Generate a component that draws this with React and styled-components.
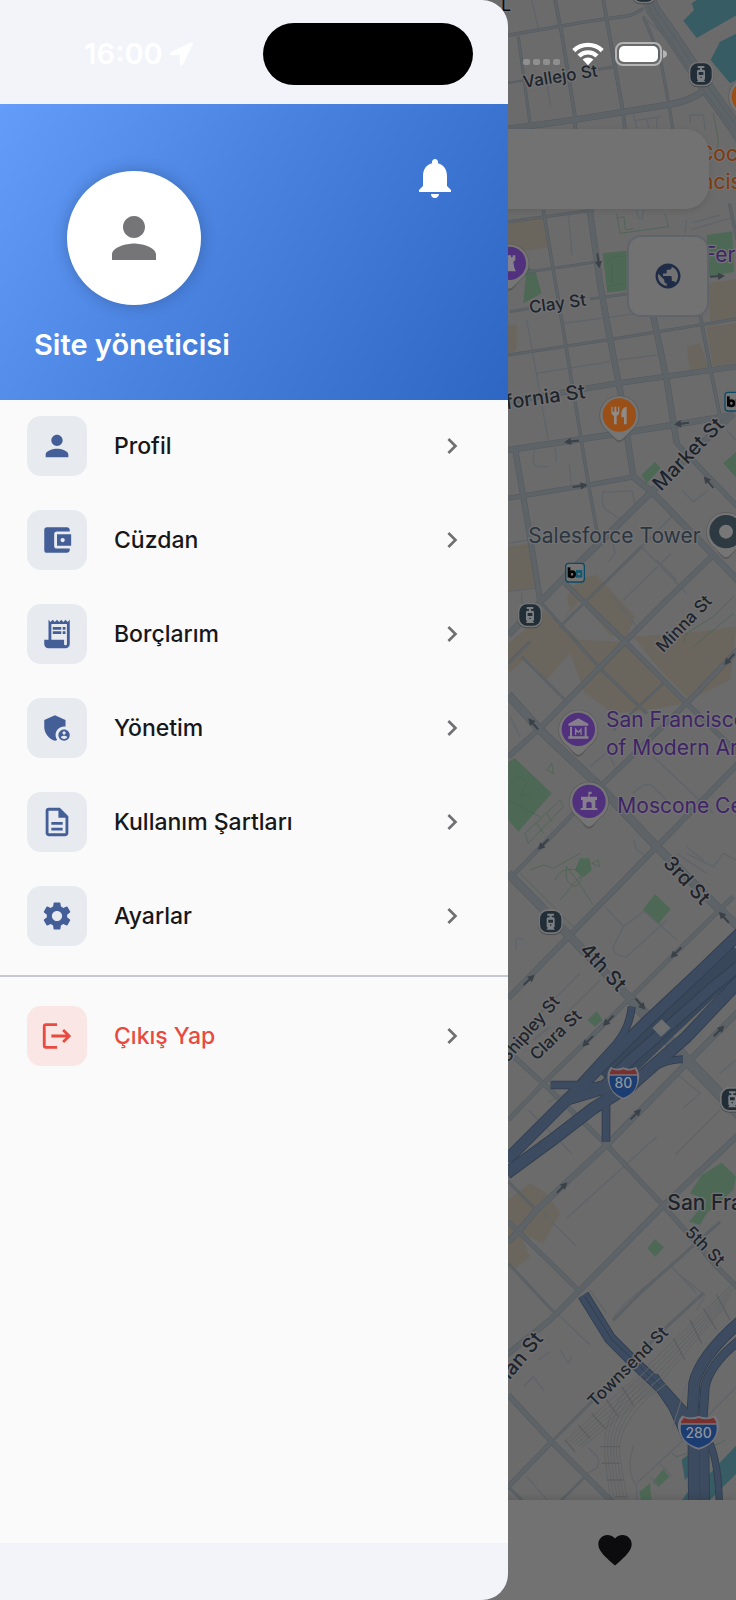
import React from "react";
import styled, { createGlobalStyle } from "styled-components";
import {
  MdAccountBalanceWallet,
  MdAdminPanelSettings,
  MdChevronRight,
  MdFavorite,
  MdLogout,
  MdNotifications,
  MdOutlineDescription,
  MdPerson,
  MdPublic,
  MdReceiptLong,
  MdSettings,
} from "react-icons/md";

const GlobalStyle = createGlobalStyle`
  * {
    box-sizing: border-box;
  }

  body {
    margin: 0;
    background: #6c6c6c;
    font-family: Inter, "Liberation Sans", sans-serif;
  }
`;

const Screen = styled.div`
  position: relative;
  display: flex;
  flex-direction: column;
  min-height: 100vh;
  overflow: hidden;
`;

/* ---------- page behind the drawer ---------- */

const MapCanvas = styled.svg`
  position: absolute;
  inset: 0;
  width: 100%;
  height: 100%;
  font-family: Inter, "Liberation Sans", sans-serif;
`;

const MapControls = styled.div`
  position: relative;
  display: flex;
  flex-direction: column;
  align-items: flex-end;
  gap: 26px;
  padding: 129px 27px 0;
`;

const SearchInput = styled.input`
  width: 100%;
  height: 80px;
  padding: 0 24px;
  border: 0;
  border-radius: 24px;
  background: #727272;
  box-shadow: 0 2px 6px rgba(0, 0, 0, 0.1);
  font: inherit;
  font-size: 23px;
`;

const MapButton = styled.button`
  display: flex;
  align-items: center;
  justify-content: center;
  width: 82px;
  height: 82px;
  padding: 0;
  border: 2px solid #60646b;
  border-radius: 14px;
  background: #727272;
  color: #1f2c48;
  font-size: 30px;
`;

const BottomNav = styled.nav`
  position: relative;
  display: grid;
  grid-template-columns: repeat(3, 1fr);
  height: 100px;
  margin-top: auto;
  background: #727272;
  box-shadow: 0 -2px 8px rgba(0, 0, 0, 0.12);
`;

const NavButton = styled.button`
  grid-column: 3;
  display: flex;
  align-items: center;
  justify-content: center;
  padding: 0 0 0 4px;
  border: 0;
  background: none;
  color: #0c0c0e;
  font-size: 40px;
`;

/* ---------- drawer ---------- */

const Drawer = styled.aside`
  position: absolute;
  top: 0;
  bottom: 0;
  left: 0;
  display: flex;
  flex-direction: column;
  width: 69%;
  padding: 104px 0 57px;
  border-radius: 0 26px 26px 0;
  background: #f2f4fa;
`;

const DrawerHeader = styled.header`
  display: flex;
  align-items: flex-start;
  justify-content: space-between;
  height: 296px;
  padding: 50px 49px 0 34px;
  background: linear-gradient(120deg, #639cf9 0%, #4a83e0 42%, #2e66c4 100%);
  color: #ffffff;
`;

const User = styled.div`
  display: flex;
  flex-direction: column;
  align-items: center;
  gap: 24px;
  width: 200px;
  padding-top: 17px;
`;

const Avatar = styled.div`
  display: flex;
  align-items: center;
  justify-content: center;
  width: 134px;
  height: 134px;
  border-radius: 50%;
  background: #ffffff;
  box-shadow: 0 0 16px rgba(0, 0, 0, 0.22);
  color: #757577;
  font-size: 66px;
`;

const UserName = styled.h1`
  width: 100%;
  margin: 0;
  font-size: 29px;
  font-weight: 600;
  line-height: 32px;
  white-space: nowrap;
`;

const BellButton = styled.button`
  display: flex;
  padding: 0;
  border: 0;
  background: none;
  color: inherit;
  font-size: 48px;
`;

const DrawerBody = styled.nav`
  flex: 1;
  padding-top: 16px;
  background: #fafafa;
`;

const MenuList = styled.ul`
  display: flex;
  flex-direction: column;
  gap: 34px;
  margin: 0;
  padding: 0;
  list-style: none;
`;

const MenuItem = styled.button`
  display: flex;
  align-items: center;
  gap: 27px;
  width: 100%;
  padding: 0 40px 0 27px;
  border: 0;
  background: none;
  color: ${(props) => (props.$danger ? "#e94a3f" : "#17171a")};
  font: inherit;
  font-size: 23px;
  font-weight: 500;
  line-height: 28px;
  text-align: left;
`;

const IconTile = styled.span`
  display: flex;
  align-items: center;
  justify-content: center;
  width: 60px;
  height: 60px;
  border-radius: 14px;
  background: ${(props) => (props.$danger ? "#fae7e5" : "#e7ebf0")};
  color: ${(props) => (props.$danger ? "#e94a3f" : "#445f98")};
  font-size: 34px;
`;

const MenuLabel = styled.span`
  flex: 1;
`;

const Chevron = styled(MdChevronRight)`
  color: #707072;
  font-size: 32px;
`;

const Divider = styled.hr`
  height: 2px;
  margin: 29px 0;
  border: 0;
  background: #c5c8d0;
`;

/* ---------- status bar ---------- */

const StatusBar = styled.div`
  position: absolute;
  top: 0;
  left: 0;
  right: 0;
  display: grid;
  grid-template-columns: 1fr 210px 1fr;
  align-items: center;
  height: 108px;
  color: #ffffff;
  pointer-events: none;
`;

const StatusLeft = styled.div`
  display: flex;
  align-items: center;
  justify-content: center;
  gap: 6px;
  padding-left: 14px;
  font-size: 29px;
  font-weight: 600;
  line-height: 32px;
`;

const Island = styled.div`
  height: 62px;
  border-radius: 31px;
  background: #000000;
`;

const StatusRight = styled.div`
  display: flex;
  align-items: center;
  justify-content: center;
  gap: 11px;
  padding-right: 20px;
`;

const MENU = [
  { label: "Profil", Icon: MdPerson },
  { label: "Cüzdan", Icon: MdAccountBalanceWallet },
  { label: "Borçlarım", Icon: MdReceiptLong },
  { label: "Yönetim", Icon: MdAdminPanelSettings },
  { label: "Kullanım Şartları", Icon: MdOutlineDescription },
  { label: "Ayarlar", Icon: MdSettings },
];

const C = {
  land: "#6b6b6b",
  pale: "#757576",
  road: "#5d6367",
  roadEdge: "#545a5f",
  thin: "#606469",
  green: "#4d6956",
  greenLine: "#456250",
  tan: "#6b665d",
  water: "#385c63",
  highway: "#3c4b5f",
  highwayEdge: "#303d4f",
  ink: "#1e242b",
  purple: "#3f2466",
  purplePin: "#51307d",
  orangePin: "#9a4f16",
};

// [path, width]
const ROADS = [
  ["M0 110 260 65 380 48Q410 42 430 25", 10],
  ["M165 0 185 100 225 350 226 400", 11],
  ["M310 0 345 200 370 340 376 400", 11],
  ["M430 50 480 170 508 320 520 400", 9],
  ["M55 110 92 385", 9],
  ["M0 252 110 236", 7],
  ["M295 208 345 200", 8],
  ["M0 390 220 360 500 315Q570 305 615 270", 20],
  ["M440-20 460 30 510 100 600 235 700 375 770 480", 42],
  ["M25 665 280 630", 9],
  ["M268 620 300 850 325 990 362 1180 400 1430", 19],
  ["M130 630 190 990 265 1450 292 1600", 10],
  ["M30 824 300 784", 8],
  ["M30 935 90 925", 8],
  ["M270 897 395 880", 8],
  ["M420 850 460 950 500 1140 530 1330", 19],
  ["M592 900 630 1100 660 1250", 11],
  ["M688 610 712 720", 10],
  ["M25 1065 320 1020 660 965 720 955", 9],
  ["M25 1205 350 1150 720 1098", 17],
  ["M25 1350 240 1318 520 1275 700 1245", 19],
  ["M25 1495 265 1455 405 1430", 15],
  ["M45 1345 85 1580 120 1800", 18],
  ["M700 1240 460 1470 200 1725 25 1905", 20],
  ["M400 1430 460 1480 640 1665 720 1748", 20],
  ["M530 1330 720 1528", 15],
  ["M640 1665 500 1800 375 1925 130 2175 25 2270", 17],
  ["M195 1750 375 1925 560 2110 720 2265", 15],
  ["M425 1640 180 1880", 8],
  ["M125 1810 300 2005 440 2140", 9],
  ["M720 1942 560 2110 300 2360", 16],
  ["M490 2050 340 2190", 7],
  ["M65 1970 200 2105", 8],
  ["M25 1990 90 1925", 8],
  ["M25 2085 120 2190 300 2360 470 2540 650 2720 720 2785", 26],
  ["M720 2285 470 2540 220 2795 25 2995", 17],
  ["M25 2620 210 2810 395 3000", 26],
  ["M395 3000 560 3180 720 3345", 34],
  ["M45 2620 240 2420", 13],
  ["M700 2690 525 2860 325 3060 140 3240 25 3360", 14],
  ["M25 3155 135 3255 320 3435 490 3617 650 3800 720 3870", 15],
  ["M720 3030 560 3190 320 3435 110 3630 50 3700 25 3725", 19],
  ["M720 3400 490 3617 240 3870 150 3960 20 4065", 18],
  ["M25 3665 240 3875", 14],
  ["M25 3545 110 3632", 8],
  ["M660 3665 420 3880 340 3960", 8],
  ["M25 4185 155 4325 340 4510", 17],
  ["M155 4325 20 4465", 15],
  ["M155 4325 270 4210 500 3980 610 3880", 8],
  ["M25 3790 160 3935", 8],
  ["M20 4455 75 4510", 8],
  ["M260 4425 175 4510", 7],
];

const HIGHWAYS = [
  ["M318 3425V3290Q312 3270 350 3240", 26],
  ["M395 3020Q390 3080 350 3130L240 3250", 24],
  ["M152 3255H230Q290 3270 340 3240", 26],
  ["M548 3178Q480 3180 440 3220L380 3280", 24],
  ["M740 2780 600 2915 440 3065 200 3300 20 3480", 36],
  ["M740 2880 640 2960 380 3190 300 3270 200 3300", 34],
  ["M740 2920 560 3110 400 3250 280 3325 150 3425 20 3520", 38],
  ["M250 3885 330 4015 400 4085 480 4160 570 4260", 36],
  ["M460 4130 520 4220 560 4310", 32],
  ["M720 3965Q600 4070 583 4150L575 4280", 36],
  ["M720 4020Q630 4090 615 4160L607 4280", 28],
  ["M582 4330 583 4510", 38],
  ["M612 4330 614 4510", 32],
  ["M630 4330Q655 4390 658 4510", 22],
];

const THIN = [
  "M95 0 115 85M440 60 500 110M140 245 152 320M205 640 216 765",
  "M400 345 412 386M404 362 484 350M470 355V386M440 360 448 386M570 345H610L616 392M570 345V370",
  "M190 970 400 942M560 660 555 700M575 688 690 655M580 668 660 645M410 630 415 655H428V630",
  "M110 1120 330 1085M355 1080 470 1065M80 960 145 1320M105 1350Q90 1395 115 1400H145M165 1345 170 1385M208 1395 214 1455",
  "M310 1470Q300 1520 320 1530L370 1565M310 1478 390 1472M395 1470 405 1510M545 1470 580 1505 625 1470M330 1590 345 1660 325 1685",
  "M515 1550 360 1700 470 1600M370 1800 515 1660M425 1640 560 1780M335 1785 410 1880M470 1680 530 1740",
  "M25 1630 85 1620M25 1775 105 1765M680 1290 708 1320M65 1780V1810H110",
  "M30 2150 60 2210M270 2300 330 2250M330 2270 345 2300M400 2380Q440 2340 460 2360L500 2400M460 2270 640 2440M560 2560 640 2600 670 2560 708 2580M560 2540 610 2580M530 2560 620 2620",
  "M400 2520 410 2550 440 2570M315 2720 370 2780 340 2840Q340 2870 380 2870L500 2760M370 2780 430 2735M50 2850Q40 2800 70 2820M435 2735 530 2820",
  "M85 3330 215 3460M470 3410 200 3655M660 3330 525 3465M535 3225 600 3280 550 3325M130 3640 228 3738M510 3795 590 3880M145 3305 240 3260M100 3120 150 3080M660 3220 708 3180M80 3080 240 2920M180 3060 300 2940",
  "M150 3920 270 4035M180 4050 205 4090 215 4070M115 4080 150 4055M70 4160 100 4130 130 4170M340 3960Q340 3930 500 3810M520 3810 615 3885 590 3930M270 3870 320 3940",
  "M265 4345Q310 4375 290 4405L250 4425M402 4335Q375 4410 410 4460V4510M410 4450 540 4330 720 4150M80 4430 150 4510M480 4390 515 4430M450 4430 480 4460",
];

const PARK_LINES = [
  "M350 640 360 700 505 680 495 640M350 655 372 650 376 690 400 686",
  "M320 790 345 768 370 770M325 860 370 850M335 790V850M640 340 655 420 650 470",
  "M30 2350 60 2330 80 2350 60 2390 90 2380M25 2400 120 2450M140 2310 155 2290 160 2320ZM75 2500 180 2400 190 2420 85 2530ZM110 2470 130 2500M140 2440 155 2465",
  "M90 2610 130 2595 160 2605 240 2560M165 2640Q180 2600 230 2610 260 2640 225 2660 190 2650 200 2600 240 2650 270 2700L280 2715M180 2700 240 2630M60 2620 220 2780M275 2590 295 2580 298 2600Z",
  "M550 1930 560 1900 640 1850 700 1790M580 1940 700 1840M515 4360 530 4370 660 4330 675 4320",
];

const TANS = [
  "25 660 140 645 150 740 25 762",
  "625 850 708 838 708 960 632 975",
  "25 975 50 975 50 1050 25 1060",
  "560 1040 600 1030 625 1105 570 1110",
  "620 980 708 970 708 1090 638 1100",
  "25 1640 90 1630 105 1765 25 1775",
  "240 1735 290 1725 405 1850 380 1915 330 1905 240 1800 180 1870 210 1830 200 1790",
  "130 1830 240 1920 370 1925 560 2110 440 2130 340 2140 255 2080 210 1960 140 2040 80 1975 25 2020 25 1930 110 1860",
  "400 1910 560 1900 708 1880 690 2040 570 2100 480 2010",
  "25 3600 90 3550 140 3580 180 3640 130 3730 60 3700 90 3770 40 3810 25 3800",
];

const GREENS = [
  "308 760 380 752 380 870 322 878",
  "620 705 697 694 702 815 628 830",
  "80 800 105 810 125 880 70 910",
  "425 1425 465 1385 482 1405 440 1450",
  "720 1345 670 1390 720 1445",
  "25 2285 45 2275 155 2380 55 2495 25 2460",
  "240 2575 268 2575 275 2610 250 2632 225 2610",
  "465 2683 512 2727 475 2772 428 2730",
  "290 3034 308 3060 285 3080 262 3060",
  "665 3488 708 3530 700 3570 620 3640 600 3675 568 3665 620 3600 570 3580 605 3525",
  "465 3718 492 3742 465 3770 442 3745",
  "490 4408 508 4430 475 4460 458 4445",
  "418 4475 450 4450 455 4510 425 4510",
];

const WATERS = [
  "550 62 582 30 575 10 590 0 720 0 720 40 590 114",
  "720 95 660 125 632 180 690 250 720 235",
  "545 4380 575 4355 575 4420 555 4440",
  "620 4430 720 4325 720 4410 620 4510 540 4510 560 4480",
];

// [x, y, heading]
const ARROWS = [
  [295, 782, 82],
  [652, 829, -4],
  [215, 1324, 173],
  [545, 1271, 173],
  [240, 1458, -7],
  [626, 1447, -130],
  [688, 1978, 132],
  [100, 2172, -132],
  [130, 2533, 135],
  [672, 2752, -132],
  [528, 2858, 135],
  [87, 2940, -42],
  [421, 3012, 48],
  [325, 3062, 135],
  [263, 3124, 135],
  [657, 3093, -45],
  [407, 3343, -45],
  [186, 3563, -45],
];

// [text, x, y, size, angle, anchor, weight, colour]
const LABELS = [
  ["Vallejo St", 72, 264, 51, -9, "start", 500, C.ink],
  ["Clay St", 90, 940, 51, -8, "start", 500, C.ink],
  ["California St", 258, 1194, 60, -8, "end", 500, C.ink],
  ["Market St", 483, 1476, 60, -46, "start", 500, C.ink],
  ["Minna St", 490, 1960, 51, -46, "start", 500, C.ink],
  ["3rd St", 487, 2592, 60, 47, "start", 500, C.ink],
  ["4th St", 236, 2852, 60, 47, "start", 500, C.ink],
  ["Shipley St", 182, 3006, 51, -49, "end", 500, C.ink],
  ["Clara St", 110, 3184, 51, -44, "start", 500, C.ink],
  ["San Francisco", 502, 3630, 63, 0, "start", 500, C.ink],
  ["5th St", 552, 3700, 51, 45, "start", 500, C.ink],
  ["Brannan St", 132, 4018, 60, -50, "end", 500, C.ink],
  ["Townsend St", 284, 4224, 51, -45, "start", 500, C.ink],
  ["Salesforce Tower", 85, 1630, 63, 0, "start", 400, "#2c363f"],
  ["San Francisco", 318, 2182, 63, 0, "start", 400, C.purple],
  ["of Modern Art", 318, 2265, 63, 0, "start", 400, C.purple],
  ["Moscone Center", 352, 2438, 63, 0, "start", 400, C.purple],
  ["Coco", 594, 483, 63, 0, "start", 400, "#813a0c"],
  ["ncisco", 603, 566, 63, 0, "start", 400, "#813a0c"],
  ["Ferry", 611, 785, 63, 0, "start", 400, C.purple],
  ["L", 3, 34, 54, 0, "start", 400, "#0d0d0d"],
];

const Pin = ({ x, y, color, children }) => (
  <g transform={`translate(${x} ${y})`}>
    <path
      d="M0 82C-12 82-18 66-32 52A60 60 0 1 1 32 52C18 66 12 82 0 82Z"
      fill="#454545"
      opacity=".45"
    />
    <path
      d="M0 76C-10 76-18 62-34 48A58 58 0 1 1 34 48C18 62 10 76 0 76Z"
      fill={C.pale}
    />
    <circle r="50" fill={color} />
    {children}
  </g>
);

const Tram = ({ x, y }) => (
  <g transform={`translate(${x} ${y})`}>
    <rect x="-37" y="-34" width="74" height="74" rx="27" fill="#4c4c4c" />
    <rect x="-37" y="-37" width="74" height="74" rx="27" fill={C.pale} />
    <rect x="-32" y="-32" width="64" height="64" rx="23" fill="#222e37" />
    <path
      d="M-10-24H10V-18H3V-13H8Q12-13 12-8V14Q12 18 8 18L13 24H-13L-8 18Q-12 18-12 14V-8Q-12-13-8-13H-3V-18H-10Z"
      fill="#7c7f82"
    />
    <path d="M-7-6H7V3H-7ZM-2 8H2V12H-2Z" fill="#222e37" />
  </g>
);

const Bart = ({ x, y }) => (
  <g transform={`translate(${x} ${y})`}>
    <rect x="-28" y="-28" width="56" height="56" rx="9" fill="#747474" stroke="#0d4a66" strokeWidth="4" />
    <path d="M-18-16V14" stroke="#050505" strokeWidth="8" />
    <circle cx="-9" cy="5" r="8" fill="none" stroke="#050505" strokeWidth="8" />
    <path d="M3-8H22V15H3Z" fill="#155a72" />
    <circle cx="12" cy="4" r="4" fill="#747474" />
  </g>
);

const Shield = ({ x, y, wide, children }) => (
  <g transform={`translate(${x} ${y})`}>
    <g transform={wide ? "scale(1.3 1.05)" : undefined}>
      <path
        d="M-38-48Q-20-38 0-47 20-38 38-48 52-30 46-4 38 34 0 50-38 34-46-4-52-30-38-48Z"
        fill="#74747c"
      />
      <path d="M-41-22H41Q46 28 0 44-46 28-41-22Z" fill="#1b3d72" />
      <path d="M-34-42Q-18-33 0-41 18-33 34-42 40-34 41-26H-41Q-40-34-34-42Z" fill="#7a312e" />
    </g>
    <text y="16" textAnchor="middle" fontSize="42" fontWeight="500" fill="#8f949c">
      {children}
    </text>
  </g>
);

const RAILS = [0, 9, 18, 27, 36, 45];

// Map units are a third of a pixel, x = 0 sits just left of the drawer edge
const CityMap = () => (
  <MapCanvas
    viewBox="-1500 0 2208 4800"
    preserveAspectRatio="xMaxYMin slice"
    aria-hidden="true"
  >
    <rect x="-1500" width="2208" height="4800" fill={C.land} />
    {TANS.map((points) => (
      <polygon key={points} points={points} fill={C.tan} />
    ))}
    {GREENS.map((points) => (
      <polygon key={points} points={points} fill={C.green} />
    ))}
    {WATERS.map((points) => (
      <polygon key={points} points={points} fill={C.water} />
    ))}
    <g fill="none" strokeLinejoin="round">
      <path d={THIN.join("")} stroke={C.thin} strokeWidth="4" />
      <path d={PARK_LINES.join("")} stroke={C.greenLine} strokeWidth="2" />
      {ROADS.map(([d, w]) => (
        <path key={d} d={d} stroke={C.roadEdge} strokeWidth={w} />
      ))}
      {ROADS.map(([d, w]) => (
        <path key={d} d={d} stroke={C.road} strokeWidth={w - 3} />
      ))}
      <path
        d="M446-20 466 30 516 100 606 235 706 375M434-10 454 40 500 108 590 243 694 385"
        stroke={C.roadEdge}
        strokeWidth="2"
      />
      <g stroke="#5b5d60" strokeWidth="2">
        {RAILS.map((n) => (
          <path
            key={n}
            d={`M${720 - n} ${3830 + n * 2}L${420 + n} ${4120 + n}L${200 + n} ${4320 + n / 2}`}
          />
        ))}
        {RAILS.map((n) => (
          <path
            key={n}
            d={`M${430 + n} ${4120 + n}Q${300 + n} ${4230 + n} ${315 + n} ${4370}T${340 + n} 4510`}
          />
        ))}
        <path d="M195 4320 225 4355M235 4275 270 4315M275 4240 315 4285M320 4200 355 4250M365 4160 400 4215M520 4015 555 4080M570 3960 605 4030M610 3925 650 3990M650 3885 690 3960M300 4340H360M305 4390H360M320 4440H370M345 4490H380" strokeWidth="4" />
      </g>
      <path d="M720 2860 490 3075 320 3240" stroke="#39475a" strokeWidth="90" />
      {HIGHWAYS.map(([d, w]) => (
        <path key={d} d={d} stroke={C.highwayEdge} strokeWidth={w} />
      ))}
      {HIGHWAYS.map(([d, w]) => (
        <path key={d} d={d} stroke={C.highway} strokeWidth={w - 5} />
      ))}
      <path d="M255 3890 335 4018 405 4085 480 4160" stroke={C.highwayEdge} strokeWidth="3" />
      <path d="M410 4140 450 4100M425 4155 465 4115M440 4170 485 4130M455 4185 500 4150M560 4150 515 4290" stroke="#62666c" strokeWidth="3" />
    </g>
    <polygon points="485 3058 512 3084 483 3110 457 3084" fill="#6c6e70" />

    {ARROWS.map(([x, y, angle]) => (
      <path
        key={`${x}-${y}`}
        transform={`translate(${x} ${y}) rotate(${angle})`}
        d="M-22-3H2V-11L23 0 2 11V3H-22Z"
        fill="#3b4148"
      />
    ))}

    {LABELS.map(([text, x, y, size, angle, anchor, weight, color]) => (
      <text
        key={`${text}-${y}`}
        transform={`translate(${x} ${y}) rotate(${angle})`}
        textAnchor={anchor}
        fontSize={size}
        fontWeight={weight}
        fill={color}
        stroke="#727274"
        strokeWidth="8"
        strokeLinejoin="round"
        paintOrder="stroke"
      >
        {text}
      </text>
    ))}

    <Pin x={28} y={790} color={C.purplePin}>
      <path d="M-17-24H-9V-18H-4V-24H5V-18H10V-24H18V-10L12-4 15 14 20 24H-19L-14 14-11-4-17-10Z" fill="#85808c" />
    </Pin>
    <Pin x={745} y={290} color={C.orangePin} />
    <Pin x={358} y={1245} color={C.orangePin}>
      <path d="M-24-25V-9Q-24 0-16 2V28H-8V2Q0 0 0-9V-25H-4V-10H-9V-25H-15V-10H-20V-25ZM22-25Q6-22 6-4V7H14V28H22Z" fill="#918b86" />
    </Pin>
    <Pin x={678} y={1595} color="#2d3a42">
      <circle r="21" fill="#777777" />
    </Pin>
    <Pin x={235} y={2188} color={C.purplePin}>
      <path d="M0-33 30-17V-11H-30V-17ZM-25-8H-19V21H-25ZM19-8H25V21H19ZM-30 21H30V28H-30Z" fill="#85808c" />
      <path d="M-8 17V0L0 9 8 0V17" fill="none" stroke="#85808c" strokeWidth="4" />
    </Pin>
    <Pin x={267} y={2404} color={C.purplePin}>
      <path d="M-2-29H8V-22H2V-14H24V-4H19V20H25V26H-25V20H-19V-4H-24V-14H-2ZM-8 20H8V8Q8 1 0 1-8 1-8 8Z" fill="#85808c" fillRule="evenodd" />
    </Pin>

    <Tram x={432} y={-27} />
    <Tram x={603} y={222} />
    <Tram x={90} y={1845} />
    <Tram x={152} y={2765} />
    <Tram x={697} y={3298} />
    <Bart x={225} y={1718} />
    <Bart x={703} y={1205} />
    <Shield x={370} y={3249}>80</Shield>
    <Shield x={596} y={4297} wide>280</Shield>
  </MapCanvas>
);

const LocationArrow = () => (
  <svg width="24" height="24" viewBox="0 0 24 24" aria-hidden="true">
    <path
      d="M22 1 2 10.400Q0 12 2 12.600H10.400Q11.400 12.600 11.400 13.600V22Q12 24.500 13.600 22L23.200 2.400Q24 0 22 1Z"
      fill="currentColor"
      stroke="currentColor"
      strokeLinejoin="round"
    />
  </svg>
);

const SignalDots = () => (
  <svg width="38" height="24" viewBox="0 0 38 24" aria-hidden="true">
    <g fill="#8f8f8f">
      <rect x="0" y="17" width="7" height="6" rx="2" />
      <rect x="10" y="17" width="7" height="6" rx="2" />
      <rect x="20" y="17" width="7" height="6" rx="2" />
      <rect x="30" y="17" width="7" height="6" rx="2" />
    </g>
  </svg>
);

const Wifi = () => (
  <svg width="32" height="24" viewBox="0 0 32 24" aria-hidden="true">
    <g fill="none" stroke="currentColor" strokeWidth="4.400">
      <path d="M1.800 8.600A20.500 20.500 0 0 1 30.200 8.600" />
      <path d="M7 14A13 13 0 0 1 25 14" />
    </g>
    <path d="M10.600 17.600A7.800 7.800 0 0 1 21.400 17.600L16 23.200Z" fill="currentColor" />
  </svg>
);

const Battery = () => (
  <svg width="52" height="24" viewBox="0 0 52 24" aria-hidden="true">
    <rect x="1" y="1" width="45" height="22" rx="7" fill="none" stroke="#b4b4b4" strokeWidth="2" />
    <rect x="4" y="4" width="39" height="16" rx="5" fill="currentColor" />
    <path d="M48 8Q52 9 52 12T48 16Z" fill="#b4b4b4" />
  </svg>
);

const DrawerItem = ({ label, Icon, danger }) => (
  <MenuItem type="button" $danger={danger}>
    <IconTile $danger={danger}>
      <Icon />
    </IconTile>
    <MenuLabel>{label}</MenuLabel>
    <Chevron />
  </MenuItem>
);

const App = () => {
  return (
    <Screen>
      <GlobalStyle />
      <CityMap />
      <MapControls>
        <SearchInput type="search" aria-label="Ara" />
        <MapButton type="button" aria-label="Harita türü">
          <MdPublic />
        </MapButton>
      </MapControls>
      <BottomNav>
        <NavButton type="button" aria-label="Favoriler">
          <MdFavorite />
        </NavButton>
      </BottomNav>

      <Drawer>
        <DrawerHeader>
          <User>
            <Avatar>
              <MdPerson />
            </Avatar>
            <UserName>Site yöneticisi</UserName>
          </User>
          <BellButton type="button" aria-label="Bildirimler">
            <MdNotifications />
          </BellButton>
        </DrawerHeader>
        <DrawerBody>
          <MenuList>
            {MENU.map(({ label, Icon }) => (
              <li key={label}>
                <DrawerItem label={label} Icon={Icon} />
              </li>
            ))}
          </MenuList>
          <Divider />
          <DrawerItem label="Çıkış Yap" Icon={MdLogout} danger />
        </DrawerBody>
      </Drawer>

      <StatusBar>
        <StatusLeft>
          <span>16:00</span>
          <LocationArrow />
        </StatusLeft>
        <Island />
        <StatusRight>
          <SignalDots />
          <Wifi />
          <Battery />
        </StatusRight>
      </StatusBar>
    </Screen>
  );
};

export default App;
